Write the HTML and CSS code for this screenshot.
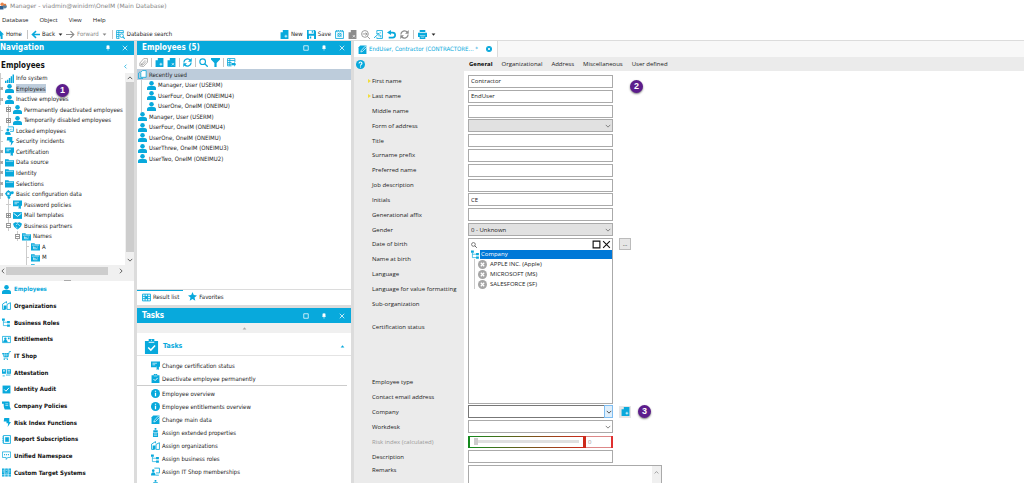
FILE: index.html
```html
<!DOCTYPE html>
<html lang="en">
<head>
<meta charset="utf-8">
<meta name="viewport" content="width=device-width, initial-scale=1">
<title>Manager - viadmin@winidm\OneIM (Main Database)</title>
<link rel="stylesheet" href="styles.css">
</head>
<body>
<svg class="sprite" aria-hidden="true">
  <symbol id="person" viewBox="0 0 16 16"><circle cx="8" cy="4.2" r="4"/><path d="M0 16v-3.500C0 9.800 3 8.600 8 8.600s8 1.200 8 3.900V16z"/></symbol>
  <symbol id="signal" viewBox="0 0 16 16"><path d="M0 12h2.600v4H0zM3.400 10H6v6H3.400zM6.800 7h2.600v9H6.800zM10.200 4h2.400v12h-2.400zM13.400 1H16v15h-2.600z"/></symbol>
  <symbol id="cert" viewBox="0 0 16 16"><path d="M0 1h16v9h-2a3 3 0 0 0-5 1H0z"/><path d="M2.500 4h8M2.500 6.800h5" stroke="#fff" stroke-width="1.200"/><circle cx="12" cy="10" r="2.600"/><path d="M10 11.500V16l2-1.400 2 1.400v-4.500z"/></symbol>
  <symbol id="locked" viewBox="0 0 16 16"><path d="M5 1.500h10v8H9M2 15.200h8" fill="none" stroke="currentColor" stroke-width="1.500"/><circle cx="5.200" cy="7" r="2.600"/><path d="M0 15c0-4 2-5 5-5s5 1 5 5z"/><path d="M9 7l2-2 2 2" fill="none" stroke="currentColor"/></symbol>
  <symbol id="bolt" viewBox="0 0 16 16"><path d="M4 0h9v7h3L10 16l1-6.500H8L8 6H3z"/></symbol>
  <symbol id="folder" viewBox="0 0 16 16"><path d="M0 2h6l1.500 2H16v11H0z"/><path d="M1.500 6h13" stroke="#fff" stroke-width=".9"/></symbol>
  <symbol id="folder-node" viewBox="0 0 16 16"><path d="M0 2h6l1.500 2H16v11H0z"/><path d="M1.500 5.500h13M4.500 8v4h7M4.500 9.500h4M11 8v2" stroke="#fff" stroke-width="1.100" fill="none"/></symbol>
  <symbol id="gears" viewBox="0 0 16 16"><circle cx="6" cy="6.500" r="3.800" fill="none" stroke="currentColor" stroke-width="2.600"/><path d="M5 0h2v13H5zM0 5.500h12v2H0z" opacity=".7"/><circle cx="6" cy="6.500" r="1.700" fill="#fff"/><circle cx="13" cy="5" r="2.600"/><circle cx="7" cy="13.500" r="2.400"/></symbol>
  <symbol id="mail" viewBox="0 0 16 16"><path d="M0 2h16v12H0z"/><path d="M1 4l7 5.500L15 4" fill="none" stroke="#fff" stroke-width="1.600"/></symbol>
  <symbol id="partners" viewBox="0 0 16 16"><path d="M0 5l4-3 4 1 4-1 4 3-2 5-6 5-6-5z"/><path d="M5 7l3-2 5 4M5 10l3 2.500" fill="none" stroke="#fff" stroke-width="1.100"/></symbol>
  <symbol id="building" viewBox="0 0 16 16"><path d="M1 15V5.500L8 1v3M1 15h5M9 6l6-3v12H9z" fill="none" stroke="currentColor" stroke-width="1.500"/><path d="M3 8h5v7H3z"/></symbol>
  <symbol id="roles" viewBox="0 0 16 16"><path d="M0 1h5v4H0zM9 5.500h5v4H9zM9 11.500h5v4H9z"/><path d="M2.500 5v8.500H9M2.500 7.500H9" fill="none" stroke="currentColor" stroke-width="1.200"/></symbol>
  <symbol id="entitle" viewBox="0 0 16 16"><path d="M.7 2.500h14.600v11H.7z" fill="none" stroke="currentColor" stroke-width="1.400"/><circle cx="6" cy="6.500" r="2.200"/><path d="M2 13c0-3 1.500-4 4-4s4 1 4 4zM10.500 4.500h3v3h-3z"/></symbol>
  <symbol id="cart" viewBox="0 0 16 16"><path d="M0 3.500h12l-1 7H3z"/><path d="M10 12.500H3M10.500 11L13 1h3" fill="none" stroke="currentColor" stroke-width="1.400"/><path d="M1 6h11M1.500 8.300h10M4.500 3v7M7.500 3v7" stroke="#fff" stroke-width=".6"/><circle cx="4" cy="14.700" r="1.200"/><circle cx="9.500" cy="14.700" r="1.200"/></symbol>
  <symbol id="attest" viewBox="0 0 16 16"><path d="M0 2h7v8H0zM8.500 2H16v8H8.500z"/><path d="M10 4.500h4.500M10 7h4.500" stroke="#fff" stroke-width="1.100"/><circle cx="3.500" cy="5" r="1.500" fill="#fff"/><path d="M1 14h4M7 12.500h8" stroke="currentColor" stroke-width="1.400"/></symbol>
  <symbol id="check" viewBox="0 0 16 16"><path d="M1 1h14v14H1z"/><path d="M4 8l3 3 5.500-6" fill="none" stroke="#fff" stroke-width="1.700"/></symbol>
  <symbol id="scroll" viewBox="0 0 16 16"><path d="M0 1h12c2 0 1.500 3 1.500 5 0 3 .5 5 2.500 9H5C3 12 3 9 3 5H0z"/><path d="M6 5h5M6 8h5" stroke="#fff" stroke-width="1"/></symbol>
  <symbol id="book" viewBox="0 0 16 16"><path d="M2.500 1h12.500v14H2.500z" fill="none" stroke="currentColor" stroke-width="1.500"/><path d="M6 4.500h6v7H6zM0 3.500h3M0 6.500h3M0 9.500h3M0 12.500h3" stroke="currentColor"/></symbol>
  <symbol id="chat" viewBox="0 0 16 16"><path d="M.8 1.500h14.400v10H10L7.500 15v-3.500H.8z" fill="none" stroke="currentColor" stroke-width="1.300"/><circle cx="4.500" cy="6.500" r="1.100"/><circle cx="8" cy="6.500" r="1.100"/><circle cx="11.500" cy="6.500" r="1.100"/></symbol>
  <symbol id="systems" viewBox="0 0 16 16"><path d="M0 1h4.500v14H0zM5.700 1h4.600v14H5.700zM11.500 1H16v14h-4.500z"/><path d="M1 4h2.500M6.700 4h2.600M12.500 4H15M1 7h2.500M6.700 9h2.600M12.500 7H15M0 12h16" stroke="#fff" stroke-width="1"/></symbol>
  <symbol id="home" viewBox="0 0 16 16"><path d="M8 0l8 8h-2.500v8H10v-5H6v5H2.500V8H0z"/></symbol>
  <symbol id="back" viewBox="0 0 16 16"><path d="M9 2L2.500 8 9 14M3 8h13" fill="none" stroke="currentColor" stroke-width="2.600"/></symbol>
  <symbol id="forward" viewBox="0 0 16 16"><path d="M8 2l6 6-6 6M14 8H0" fill="none" stroke="currentColor" stroke-width="2"/></symbol>
  <symbol id="dbsearch" viewBox="0 0 16 16"><path d="M13 6V1H1v14h5M1 4.500h12M1 8h5M1 11.500h4M5 1v14" fill="none" stroke="currentColor" stroke-width="1.400"/><circle cx="10" cy="10" r="3.200" fill="none" stroke="currentColor" stroke-width="1.500"/><path d="M12 12l3.500 3.500" stroke="currentColor" stroke-width="1.800"/></symbol>
  <symbol id="docplus" viewBox="0 0 16 16"><path d="M5 0h10v16H1V4h4z"/><path d="M10.500 8.500v5M8 11h5" stroke="#fff" stroke-width="1.300"/></symbol>
  <symbol id="docx" viewBox="0 0 16 16"><path d="M5 0h10v16H1V4h4z"/><path d="M8.500 9l4 4M12.500 9l-4 4" stroke="#fff" stroke-width="1.200"/></symbol>
  <symbol id="save" viewBox="0 0 16 16"><path d="M0 0h14l2 2v14H0z"/><path d="M3 1h9v5.500H3zM3.500 10h9v6h-9z" fill="#fff"/><path d="M8.500 1.500h2V5h-2zM5 11.500h2.500V15H5z"/></symbol>
  <symbol id="gearbox" viewBox="0 0 16 16"><path d="M1 2h14v13H1zM3 0v3M13 0v3M6 0v2M10 0v2" fill="none" stroke="currentColor" stroke-width="1.500"/><circle cx="8" cy="8.500" r="3" fill="none" stroke="currentColor" stroke-width="1.600"/><path d="M4 4.500l8 8M12 4.500l-8 8" stroke="currentColor"/></symbol>
  <symbol id="zoomrow" viewBox="0 0 16 16"><circle cx="7" cy="7" r="6" fill="none" stroke="currentColor" stroke-width="1.500"/><path d="M11.500 11.500L16 16M3 7h8M8 5l3 2-3 3" fill="none" stroke="currentColor" stroke-width="1.500"/></symbol>
  <symbol id="import" viewBox="0 0 16 16"><path d="M5 5V1h10v14H5v-2" fill="none" stroke="currentColor" stroke-width="1.500"/><path d="M0 14l8-7M4 6.500h5v5M11 4v2M12 9v4" fill="none" stroke="currentColor" stroke-width="1.600"/></symbol>
  <symbol id="undo" viewBox="0 0 16 16"><path d="M7 0v3h3a5.500 5.500 0 0 1 0 12H3v-3h7a2.500 2.500 0 0 0 0-6H7v3L0 4.500z"/></symbol>
  <symbol id="refresh" viewBox="0 0 16 16"><path d="M1.500 8A6.500 6.500 0 0 1 13 4M14.500 8A6.500 6.500 0 0 1 3 12" fill="none" stroke="currentColor" stroke-width="2.200"/><path d="M15.500 0v6.500H9zM.5 16V9.500H7z"/></symbol>
  <symbol id="print" viewBox="0 0 16 16"><path d="M3 0h10v4H3zM0 5h16v7.500H0zM3 11h10v5H3z"/><path d="M3.500 4.600h9M3 10h10M5 12.800h6" stroke="#fff"/></symbol>
  <symbol id="clip" viewBox="0 0 16 16"><path d="M1.500 14V9l7-8H15v6.500L8 15.200zM4 12l7-8M6.500 13l6-7M4 9.500V12h3" fill="none" stroke="currentColor" stroke-width="1.200"/></symbol>
  <symbol id="search" viewBox="0 0 16 16"><circle cx="6.500" cy="6.500" r="5" fill="none" stroke="currentColor" stroke-width="2"/><path d="M10 10l5.500 5.500" stroke="currentColor" stroke-width="2.400"/></symbol>
  <symbol id="filter" viewBox="0 0 16 16"><path d="M0 0h16v2.500L10 9v7H6V9L0 2.500z"/></symbol>
  <symbol id="export" viewBox="0 0 16 16"><path d="M1 1h13v6M1 1v13h7M1 4.500h13M1 8h7M1 11h7M5 1v13" fill="none" stroke="currentColor" stroke-width="1.500"/><path d="M8 9h5V6.500l3 4.500-3 4.500V13H8z"/></symbol>
  <symbol id="pages" viewBox="0 0 16 16"><path d="M8 1h6.500v12H5V4z" fill="#fff" stroke="currentColor" stroke-width="1.400"/><path d="M4 3L1 5.500V15h8" fill="none" stroke="currentColor" stroke-width="1.400"/></symbol>
  <symbol id="table" viewBox="0 0 16 16"><path d="M1 2h14v12H1zM1 6h14M1 10h14M5.500 2v12M10 2v12" fill="none" stroke="currentColor" stroke-width="1.600"/><path d="M5.500 6H10v4H5.500z"/></symbol>
  <symbol id="star" viewBox="0 0 16 16"><path d="M8 0l2.300 5.500 5.700.5-4.400 3.800L13 15.500 8 12.400 3 15.500l1.400-5.700L0 6l5.700-.5z"/></symbol>
  <symbol id="clipboard" viewBox="0 0 16 16"><path d="M1 2h4V0h6v2h4v14H1z"/><path d="M5 3.500h6M7.500 1.300h1" stroke="#fff"/><path d="M4.500 9l2.800 2.800L11.800 7" fill="none" stroke="#fff" stroke-width="1.600"/></symbol>
  <symbol id="info" viewBox="0 0 16 16"><circle cx="8" cy="8" r="8"/><path d="M8 6.500V13M8 3v2" stroke="#fff" stroke-width="2.200"/></symbol>
  <symbol id="edit" viewBox="0 0 16 16"><path d="M4 1h11v15H1V4z"/><path d="M5 12.500l1-3L13 2l2.500 2L8 11.500z" stroke="#fff" stroke-width="1.200"/></symbol>
  <symbol id="props" viewBox="0 0 16 16"><path d="M6.500 0h3v3h-3zM4 4h8v3H4zM3.500 8h9v8h-9z"/><path d="M5 10.500h6M5 13h6" stroke="#fff"/></symbol>
  <symbol id="shopuser" viewBox="0 0 16 16"><path d="M6 2h9v8.500H9M8 14.500h6" fill="none" stroke="currentColor" stroke-width="1.500"/><circle cx="4" cy="6.500" r="2.300"/><path d="M0 15c0-4 1.500-5.500 4-5.500S8 11 8 15z"/></symbol>
  <symbol id="help" viewBox="0 0 16 16"><circle cx="8" cy="8" r="8"/><path d="M5.300 6.200C5.500 2.600 10.800 2.800 10.600 6c-.1 1.800-2.600 1.800-2.600 4M8 11.500v2" fill="none" stroke="#fff" stroke-width="1.900"/></symbol>
  <symbol id="round-x" viewBox="0 0 16 16"><circle cx="8" cy="8" r="8"/><path d="M5 5l6 6M11 5l-6 6" stroke="#fff" stroke-width="2.200"/></symbol>
  <symbol id="pin" viewBox="0 0 16 16"><path d="M5 2h6v7H5zM3 9h10M8 9v6" stroke="currentColor" stroke-width="1.600"/></symbol>
  <symbol id="square" viewBox="0 0 16 16"><path d="M2 2h12v12H2z" fill="none" stroke="currentColor" stroke-width="2"/></symbol>
  <symbol id="cross" viewBox="0 0 16 16"><path d="M2 2l12 12M14 2L2 14" stroke="currentColor" stroke-width="2"/></symbol>
  <symbol id="down" viewBox="0 0 16 16"><path d="M2 5l6 6 6-6" fill="none" stroke="currentColor" stroke-width="2.400"/></symbol>
  <symbol id="up" viewBox="0 0 16 16"><path d="M2 11l6-6 6 6" fill="none" stroke="currentColor" stroke-width="2.400"/></symbol>
  <symbol id="left" viewBox="0 0 16 16"><path d="M11 2L5 8l6 6" fill="none" stroke="currentColor" stroke-width="2.400"/></symbol>
  <symbol id="right" viewBox="0 0 16 16"><path d="M5 2l6 6-6 6" fill="none" stroke="currentColor" stroke-width="2.400"/></symbol>
  <symbol id="caret" viewBox="0 0 16 16"><path d="M2 5h12l-6 7z"/></symbol>
  <symbol id="caret-up" viewBox="0 0 16 16"><path d="M2 11h12L8 4z"/></symbol>
  <symbol id="plus" viewBox="0 0 5 5"><path d="M0 0h5v5H0z" fill="#999"/><path d="M1 1h3v3H1z" fill="#fff"/><path d="M1 2.500h3M2.500 1v3" stroke="#777" stroke-width=".8"/></symbol>
  <symbol id="minus" viewBox="0 0 5 5"><path d="M0 0h5v5H0z" fill="#999"/><path d="M1 1h3v3H1z" fill="#fff"/><path d="M1 2.500h3" stroke="#777" stroke-width=".8"/></symbol>
</svg>

<header class="titlebar">
  <svg class="logo" viewBox="0 0 16 16" aria-hidden="true"><circle cx="5" cy="4" r="4" fill="#e8834a"/><path d="M0 8h8v8H0z" fill="#2d5f91"/><circle cx="11" cy="9" r="4.500" fill="#59819f"/><path d="M9 3h5v4H9z" fill="#db7c3f"/></svg>
  <h1>Manager - viadmin@winidm\OneIM (Main Database)</h1>
</header>
<nav class="menubar" aria-label="Menu">
  <button>Database</button><button>Object</button><button>View</button><button>Help</button>
</nav>
<div class="toolbar">
  <div class="tools-left">
    <button><svg class="i"><use href="#home"/></svg>Home</button><span class="sep"></span>
    <button><svg class="i"><use href="#back"/></svg>Back</button><button aria-label="Back history"><svg class="tiny"><use href="#caret"/></svg></button>
    <button class="muted"><svg class="i"><use href="#forward"/></svg>Forward</button><button class="muted" aria-label="Forward history"><svg class="tiny"><use href="#caret"/></svg></button><span class="sep"></span>
    <button><svg class="i"><use href="#dbsearch"/></svg>Database search</button>
  </div>
  <div class="tools-main">
    <button><svg class="i"><use href="#docplus"/></svg>New</button>
    <button><svg class="i"><use href="#save"/></svg>Save</button>
    <button aria-label="Configure"><svg class="i"><use href="#gearbox"/></svg></button>
    <button aria-label="Delete" class="muted"><svg class="i"><use href="#docx"/></svg></button>
    <button aria-label="Find" class="muted"><svg class="i"><use href="#zoomrow"/></svg></button>
    <button aria-label="Import"><svg class="i"><use href="#import"/></svg></button>
    <button aria-label="Undo"><svg class="i"><use href="#undo"/></svg></button>
    <button aria-label="Refresh" class="muted"><svg class="i"><use href="#refresh"/></svg></button><span class="sep"></span>
    <button aria-label="Print"><svg class="i"><use href="#print"/></svg></button><button aria-label="Print options"><svg class="tiny"><use href="#caret"/></svg></button>
  </div>
</div>

<div class="workspace">
  <aside class="panel navpanel">
    <header class="panel-head"><h2>Navigation</h2><button aria-label="Pin"><svg class="small"><use href="#pin"/></svg></button><button aria-label="Close"><svg class="small"><use href="#cross"/></svg></button></header>
    <div class="section-head"><h3>Employees</h3><button aria-label="Collapse"><svg class="tiny"><use href="#left"/></svg></button></div>
    <div class="tree-area">
      <ul class="tree">
        <li><span class="leaf"></span><svg class="i"><use href="#signal"/></svg>Info system</li>
        <li><svg class="exp"><use href="#plus"/></svg><svg class="i"><use href="#person"/></svg><span class="selected">Employees</span><b class="badge on-tree">1</b></li>
        <li><svg class="exp"><use href="#minus"/></svg><svg class="i"><use href="#person"/></svg>Inactive employees</li>
        <li class="d1"><svg class="exp"><use href="#plus"/></svg><svg class="i"><use href="#person"/></svg>Permanently deactivated employees</li>
        <li class="d1"><svg class="exp"><use href="#plus"/></svg><svg class="i"><use href="#person"/></svg>Temporarily disabled employees</li>
        <li><span class="leaf"></span><svg class="i"><use href="#locked"/></svg>Locked employees</li>
        <li><span class="leaf"></span><svg class="i"><use href="#bolt"/></svg>Security incidents</li>
        <li><svg class="exp"><use href="#plus"/></svg><svg class="i"><use href="#cert"/></svg>Certification</li>
        <li><svg class="exp"><use href="#plus"/></svg><svg class="i"><use href="#folder"/></svg>Data source</li>
        <li><svg class="exp"><use href="#plus"/></svg><svg class="i"><use href="#folder"/></svg>Identity</li>
        <li><svg class="exp"><use href="#plus"/></svg><svg class="i"><use href="#folder"/></svg>Selections</li>
        <li><svg class="exp"><use href="#minus"/></svg><svg class="i"><use href="#gears"/></svg>Basic configuration data</li>
        <li class="d1"><span class="leaf"></span><svg class="i"><use href="#cert"/></svg>Password policies</li>
        <li class="d1"><svg class="exp"><use href="#plus"/></svg><svg class="i"><use href="#mail"/></svg>Mail templates</li>
        <li class="d1"><svg class="exp"><use href="#minus"/></svg><svg class="i"><use href="#partners"/></svg>Business partners</li>
        <li class="d2"><svg class="exp"><use href="#minus"/></svg><svg class="i"><use href="#folder-node"/></svg>Names</li>
        <li class="d3"><span class="leaf"></span><svg class="i"><use href="#folder-node"/></svg>A</li>
        <li class="d3"><span class="leaf"></span><svg class="i"><use href="#folder-node"/></svg>M</li>
        <li class="d3"><span class="leaf"></span><svg class="i"><use href="#folder-node"/></svg></li>
      </ul>
      <div class="vbar"><svg class="small"><use href="#up"/></svg><span></span><svg class="small"><use href="#down"/></svg></div>
    </div>
    <div class="hbar"><svg class="small"><use href="#left"/></svg><span></span><svg class="small"><use href="#right"/></svg></div>
    <div class="splitter"></div>
    <nav class="modules" aria-label="Modules">
      <a href="#" class="current"><svg class="i"><use href="#person"/></svg>Employees</a>
      <a href="#"><svg class="i"><use href="#building"/></svg>Organizations</a>
      <a href="#"><svg class="i"><use href="#roles"/></svg>Business Roles</a>
      <a href="#"><svg class="i"><use href="#entitle"/></svg>Entitlements</a>
      <a href="#"><svg class="i"><use href="#cart"/></svg>IT Shop</a>
      <a href="#"><svg class="i"><use href="#attest"/></svg>Attestation</a>
      <a href="#"><svg class="i"><use href="#check"/></svg>Identity Audit</a>
      <a href="#"><svg class="i"><use href="#scroll"/></svg>Company Policies</a>
      <a href="#"><svg class="i"><use href="#bolt"/></svg>Risk Index Functions</a>
      <a href="#"><svg class="i"><use href="#book"/></svg>Report Subscriptions</a>
      <a href="#"><svg class="i"><use href="#chat"/></svg>Unified Namespace</a>
      <a href="#"><svg class="i"><use href="#systems"/></svg>Custom Target Systems</a>
    </nav>
  </aside>

  <div class="middle">
    <section class="panel results">
      <header class="panel-head wide"><h2>Employees (5)</h2><button aria-label="Maximize"><svg class="small"><use href="#square"/></svg></button><button aria-label="Pin"><svg class="small"><use href="#pin"/></svg></button><button aria-label="Close"><svg class="small"><use href="#cross"/></svg></button></header>
      <div class="list-tools">
        <button aria-label="Attach" class="muted"><svg class="i"><use href="#clip"/></svg></button><span class="sep"></span>
        <button aria-label="Add"><svg class="i"><use href="#docplus"/></svg></button>
        <button aria-label="Remove"><svg class="i"><use href="#docx"/></svg></button><span class="sep"></span>
        <button aria-label="Reload"><svg class="i"><use href="#refresh"/></svg></button><span class="sep"></span>
        <button aria-label="Search"><svg class="i"><use href="#search"/></svg></button>
        <button aria-label="Filter"><svg class="i"><use href="#filter"/></svg></button><span class="sep"></span>
        <button aria-label="Export"><svg class="i"><use href="#export"/></svg></button>
      </div>
      <ul class="people">
        <li class="group"><svg class="i"><use href="#pages"/></svg>Recently used</li>
        <li class="recent"><svg class="i"><use href="#person"/></svg>Manager, User (USERM)</li>
        <li class="recent"><svg class="i"><use href="#person"/></svg>UserFour, OneIM (ONEIMU4)</li>
        <li class="recent"><svg class="i"><use href="#person"/></svg>UserOne, OneIM (ONEIMU)</li>
        <li><svg class="i"><use href="#person"/></svg>Manager, User (USERM)</li>
        <li><svg class="i"><use href="#person"/></svg>UserFour, OneIM (ONEIMU4)</li>
        <li><svg class="i"><use href="#person"/></svg>UserOne, OneIM (ONEIMU)</li>
        <li><svg class="i"><use href="#person"/></svg>UserThree, OneIM (ONEIMU3)</li>
        <li><svg class="i"><use href="#person"/></svg>UserTwo, OneIM (ONEIMU2)</li>
      </ul>
      <div class="result-tabs"><button class="active"><svg class="i"><use href="#table"/></svg>Result list</button><button><svg class="i"><use href="#star"/></svg>Favorites</button></div>
    </section>
    <section class="panel tasks">
      <header class="panel-head wide"><h2>Tasks</h2><button aria-label="Maximize"><svg class="small"><use href="#square"/></svg></button><button aria-label="Pin"><svg class="small"><use href="#pin"/></svg></button><button aria-label="Close"><svg class="small"><use href="#cross"/></svg></button></header>
      <button class="scroll-up" aria-label="Scroll up"><svg class="tiny"><use href="#caret-up"/></svg></button>
      <div class="task-head"><svg class="big"><use href="#clipboard"/></svg><h3>Tasks</h3><svg class="tiny"><use href="#caret-up"/></svg></div>
      <div class="task-list">
        <a href="#"><svg class="i"><use href="#cert"/></svg>Change certification status</a>
        <a href="#"><svg class="i"><use href="#clipboard"/></svg>Deactivate employee permanently</a>
        <hr>
        <a href="#"><svg class="i"><use href="#info"/></svg>Employee overview</a>
        <a href="#"><svg class="i"><use href="#info"/></svg>Employee entitlements overview</a>
        <a href="#"><svg class="i"><use href="#edit"/></svg>Change main data</a>
        <a href="#"><svg class="i"><use href="#props"/></svg>Assign extended properties</a>
        <a href="#"><svg class="i"><use href="#building"/></svg>Assign organizations</a>
        <a href="#"><svg class="i"><use href="#roles"/></svg>Assign business roles</a>
        <a href="#"><svg class="i"><use href="#shopuser"/></svg>Assign IT Shop memberships</a>
        <a href="#" aria-label="More tasks"><svg class="i"><use href="#props"/></svg></a>
      </div>
    </section>
  </div>

  <main class="document">
    <div class="doc-tabs"><div class="doc-tab"><svg class="i"><use href="#edit"/></svg><span>EndUser, Contractor (CONTRACTORE... *</span><button aria-label="Close tab"><svg class="small"><use href="#round-x"/></svg></button></div></div>
    <div class="page-tabs">
      <button class="help" aria-label="Help"><svg class="i"><use href="#help"/></svg></button>
      <button class="active">General</button><button>Organizational</button><button>Address</button><button>Miscellaneous</button><button>User defined</button>
    </div>
    <form class="form">
      <div class="rows">
        <div class="row required"><label for="f1">First name</label><input id="f1" value="Contractor"><b class="badge beside">2</b></div>
        <div class="row required"><label for="f2">Last name</label><input id="f2" value="EndUser"></div>
        <div class="row"><label for="f3">Middle name</label><input id="f3"></div>
        <div class="row"><label for="f4">Form of address</label><span class="pick off"><select id="f4"><option></option></select><svg class="small"><use href="#down"/></svg></span></div>
        <div class="row"><label for="f5">Title</label><input id="f5"></div>
        <div class="row"><label for="f6">Surname prefix</label><input id="f6"></div>
        <div class="row"><label for="f7">Preferred name</label><input id="f7"></div>
        <div class="row"><label for="f8">Job description</label><input id="f8"></div>
        <div class="row"><label for="f9">Initials</label><input id="f9" value="CE"></div>
        <div class="row"><label for="f10">Generational affix</label><input id="f10"></div>
        <div class="row"><label for="f11">Gender</label><span class="pick off"><select id="f11"><option>0 - Unknown</option></select><svg class="small"><use href="#down"/></svg></span></div>
        <div class="row"><span class="label">Date of birth</span><span></span><button type="button" class="side more" aria-label="Choose date">...</button></div>
        <div class="row"><span class="label">Name at birth</span></div>
        <div class="row"><span class="label">Language</span></div>
        <div class="row"><span class="label">Language for value formatting</span></div>
        <div class="row"><span class="label">Sub-organization</span></div>
      </div>
      <div class="row tall"><span class="label">Certification status</span></div>
      <div class="rows lower">
        <div class="row"><span class="label">Employee type</span></div>
        <div class="row"><span class="label">Contact email address</span></div>
        <div class="row"><label for="f12">Company</label>
          <span class="pick open"><select id="f12"><option></option></select><span class="drop"><svg class="small"><use href="#down"/></svg></span>
            <span class="popup">
              <span class="popup-search"><svg class="small"><use href="#search"/></svg><input aria-label="Search company"><button type="button" aria-label="Maximize list"><svg class="i"><use href="#square"/></svg></button><button type="button" aria-label="Close list"><svg class="i bold"><use href="#cross"/></svg></button></span>
              <span class="popup-root"><svg class="i"><use href="#roles"/></svg><span>Company</span></span>
              <span class="popup-item"><svg class="i"><use href="#round-x"/></svg>APPLE INC. (Apple)</span>
              <span class="popup-item"><svg class="i"><use href="#round-x"/></svg>MICROSOFT (MS)</span>
              <span class="popup-item"><svg class="i"><use href="#round-x"/></svg>SALESFORCE (SF)</span>
            </span>
          </span>
          <button type="button" class="side" aria-label="New company"><svg class="i"><use href="#docplus"/></svg></button><b class="badge after">3</b></div>
        <div class="row"><label for="f13">Workdesk</label><span class="pick"><select id="f13"><option></option></select><svg class="small"><use href="#down"/></svg></span></div>
        <div class="row dim"><label for="f14">Risk index (calculated)</label><span class="risk"><span class="risk-track"><input id="f14" type="range" min="0" max="100" value="0"></span><output for="f14">0</output></span></div>
        <div class="row"><label for="f15">Description</label><input id="f15"></div>
        <div class="row remarks"><label for="f16">Remarks</label><span class="memo"><textarea id="f16"></textarea><span><svg class="tiny"><use href="#up"/></svg></span></span></div>
      </div>
    </form>
  </main>
</div>
</body>
</html>
```
FILE: styles.css
```css
:root {
  --accent: #08a9dc;
  --chrome: #f0f0f0;
  --line: #dcdcdc;
  --tahoma: "DejaVu Sans Condensed", "DejaVu Sans", sans-serif;
  --segoe: "Open Sans", "Noto Sans", sans-serif;
}
* { box-sizing: border-box; }
body {
  margin: 0;
  height: 100vh;
  display: flex;
  flex-direction: column;
  overflow: hidden;
  background: #fff;
  color: #222;
  font: 6px/8px var(--segoe);
}
h1, h2, h3, ul { margin: 0; padding: 0; font: inherit; }
ul { list-style: none; }
button { border: 0; padding: 0; background: none; color: inherit; font: inherit; display: flex; align-items: center; }
a { color: inherit; text-decoration: none; }
svg { fill: currentColor; flex: none; }
.sprite { position: absolute; width: 0; height: 0; }
.i { width: 9px; height: 9px; color: var(--accent); }
.tiny { width: 5px; height: 5px; }
.small { width: 6px; height: 6px; }
.big { width: 15px; height: 17px; color: var(--accent); }
.muted { color: #888; }
.muted .i { color: #8c8c8c; }
.sep { width: 1px; height: 9px; background: #c4c4c4; }

/* Window chrome */
.titlebar { flex: none; height: 11px; display: flex; align-items: center; gap: 3px; color: #858585; font-family: "DejaVu Sans", sans-serif; }
.logo { width: 7px; height: 8px; }
.menubar { flex: none; height: 17px; display: flex; align-items: center; gap: 11px; padding: 0 2px; }
.toolbar { flex: none; height: 12px; display: flex; align-items: center; font-family: var(--tahoma); }
.tools-left, .tools-main { display: flex; align-items: center; gap: 4px; height: 12px; }
.tools-left { flex: 0 0 280px; gap: 3px; }
.tools-left button:first-child .i { margin-left: -5px; }
.tools-left .sep { margin-left: 2px; }
.toolbar button { gap: 2px; }

/* Panels */
.workspace { flex: 1; min-height: 0; display: flex; gap: 3px; padding-top: 1px; background: var(--line); }
.panel { background: #fff; display: flex; flex-direction: column; min-height: 0; }
.panel-head { flex: none; height: 14px; display: flex; align-items: center; gap: 11px; padding: 0 6px 0 0; background: var(--accent); color: #fff; }
.panel-head.wide { gap: 12px; padding-left: 5px; }
.panel-head h2 { flex: 1; font: bold 8px/12px var(--tahoma); }
.navpanel { flex: 0 0 134px; font-family: var(--tahoma); }
.section-head { flex: none; height: 18px; padding: 4px 6px 0 1px; display: flex; justify-content: space-between; align-items: center; color: var(--accent); }
.section-head h3 { color: #111; font: bold 8px/12px var(--tahoma); }

/* Object tree */
.tree-area { flex: none; height: 192px; overflow: hidden; display: flex; }
.tree { flex: 1; min-width: 0; height: 200px; display: grid; grid-template-rows: repeat(19, 1fr); overflow: hidden; }
.tree li { position: relative; display: flex; align-items: center; gap: 2px; white-space: nowrap; min-height: 0; }
.tree li::before { content: ""; position: absolute; top: 0; bottom: 0; left: 0; width: 1px; background: #ccc; }
.tree .d1::before { left: 8px; }
.tree .d2::before { left: 17px; }
.tree .d3::before { left: 26px; }
.exp, .leaf { position: relative; flex: none; width: 3px; height: 5px; }
.leaf { height: 1px; background: #ccc; }
.d1 .exp, .d2 .exp, .d3 .exp, .d1 .leaf { width: 5px; }
.tree .d1 { padding-left: 6px; }
.tree .d2 { padding-left: 15px; }
.tree .d3 { padding-left: 26px; }
.selected { background: #bdccdb; line-height: 9px; }
.vbar { flex: none; width: 9px; background: var(--chrome); display: flex; flex-direction: column; align-items: center; justify-content: space-between; color: #555; padding: 2px 0; }
.vbar span { flex: 1; width: 8px; margin: 1px 0 5px; background: #cdcdcd; }
.hbar { flex: none; height: 11px; display: flex; align-items: center; justify-content: space-between; background: var(--chrome); color: #555; padding-right: 10px; }
.hbar span { flex: 1; height: 8px; margin: 0 10px 0 0; background: #cdcdcd; }
.splitter { flex: none; height: 5px; background: var(--chrome); display: flex; justify-content: center; align-items: flex-end; }
.splitter::after { content: ""; width: 7px; height: 1px; background: #aaa; }
.modules { height: 200px; display: grid; grid-template-rows: repeat(12, 1fr); padding-left: 2px; font-weight: bold; color: #111; }
.modules a { display: flex; align-items: center; gap: 3px; }
.modules .current { color: var(--accent); }

/* Result list and tasks */
.middle { flex: 0 0 214px; display: flex; flex-direction: column; gap: 3px; font-family: var(--tahoma); }
.results { flex: 0 0 264px; }
.list-tools { flex: none; height: 14px; display: flex; align-items: center; gap: 3px; padding-left: 2px; }
.people { flex: 1; display: grid; grid-template-rows: 11px repeat(8, 1fr); align-content: start; max-height: 95px; }
.people li { display: flex; align-items: center; gap: 2px; padding-left: 1px; }
.people .group { background: #bdccdb; }
.people .recent { margin-left: 4px; padding-left: 5px; border-left: 1px solid #ccc; }
.result-tabs { margin-top: auto; height: 16px; display: flex; gap: 1px; border-top: 1px solid var(--line); }
.result-tabs button { gap: 2px; padding: 0 4px 2px; }
.result-tabs .active { padding-left: 5px; border-top: 1px solid var(--accent); }
.tasks { flex: 1; overflow: hidden; }
.tasks .panel-head { height: 15px; }
.scroll-up { flex: none; height: 10px; background: var(--chrome); color: #aaa; justify-content: center; }
.task-head { flex: none; height: 23px; display: flex; align-items: center; gap: 4px; padding: 4px 6px 0 7px; border-bottom: 1px solid #e4e4e4; color: var(--accent); }
.task-head h3 { flex: 1; font: bold 7px/9px var(--tahoma); }
.task-list { flex: none; padding-top: 3px; }
.task-list a { height: 13px; margin-left: 14px; display: flex; align-items: center; gap: 2px; }
.task-list hr { margin: 0 4px 1px 0; border: 0; border-top: 1px solid #ccc; }

/* Document */
.document { flex: 1; min-width: 0; background: #fff; margin-left: -1px; border-left: 1px solid var(--line); }
.doc-tabs { height: 16px; display: flex; background: #f8f8f8; }
.doc-tab { display: flex; align-items: center; gap: 2px; padding: 0 5px 0 4px; background: #fff; border-right: 1px solid var(--line); color: var(--accent); font-family: var(--tahoma); }
.doc-tab button { margin-left: 6px; }
.page-tabs { position: relative; height: 14px; display: flex; gap: 9px; padding-left: 115px; background: #ebebeb; }
.page-tabs .active { font-weight: bold; color: #000; }
.help { position: absolute; left: 2px; top: 3px; }
.form { padding-top: 3px; background: linear-gradient(to right, #ebebeb 110px, #fff 110px); }
.rows { height: 237px; display: grid; grid-template-rows: repeat(16, 1fr); }
.rows.lower { height: 112px; grid-template-rows: repeat(6, 15px) 26px; }
.row { position: relative; display: grid; grid-template-columns: 96px 145px auto 1fr; align-items: center; padding-left: 18px; min-height: 0; }
.row.tall { height: 63px; align-items: start; padding-top: 12px; }
.row.required::before { content: ""; position: absolute; left: 14px; top: 5px; border-left: 3px solid #f1dd3c; border-top: 2px solid transparent; border-bottom: 2px solid transparent; }
.dim { color: #999; }
.row > input, .pick { width: 100%; height: 13px; }
input, select, textarea { border: 1px solid #aaa; border-radius: 0; margin: 0; padding: 0 2px; background: #fff; color: #222; font: inherit; outline: 0; }
.pick { position: relative; display: flex; align-items: center; color: #777; }
.pick > select { appearance: none; width: 100%; height: 100%; }
.pick > .small { position: absolute; right: 2px; top: 4px; }
.pick.off > select { background: #e1e1e1; }
.pick.open > select { border-color: #777; }
.drop { position: absolute; right: 0; top: 0; width: 9px; height: 13px; display: grid; place-items: center; border: 1px solid #7fbdf0; background: #e0effb; color: #444; }
.side { width: 12px; height: 12px; margin-left: 6px; justify-content: center; background: #e6e6e6; color: var(--accent); }
.more { border: 1px solid #bbb; color: #222; }

.popup { position: absolute; left: 0; right: 0; bottom: 14px; height: 166px; border: 1px solid #aaa; background: #fff; color: #222; z-index: 1; }
.popup-search { height: 11px; display: flex; align-items: center; gap: 1px; padding: 0 1px 0 0; }
.popup-search .small { margin-left: 2px; color: #555; }
.popup-search .i { color: #111; }
.popup-search input { flex: 1; min-width: 0; border: 0; height: 9px; }
.popup-search .bold { stroke: currentColor; stroke-width: 1px; }
.popup-root, .popup-item { display: flex; align-items: center; }
.popup-root .i { margin-left: 2px; }
.popup-root span { flex: 1; padding-left: 1px; line-height: 9px; background: #0078d7; color: #fff; }
.popup-item { height: 10px; gap: 3px; margin-left: 5px; padding-left: 3px; border-left: 1px solid #ccc; }
.popup-item .i { color: #a5a5a5; }

.risk { height: 12px; display: flex; border-right: 2px solid #e03030; color: #999; }
.risk-track { flex: 0 0 118px; display: flex; align-items: center; border: 1px solid; border-width: 1px 3px 1px 2px; border-image: linear-gradient(to right, #128a1c, #cf2a1c) 2; padding: 0 4px; }
.risk-track input { appearance: none; width: 100%; height: 3px; border: 0; padding: 0; background: #e0e0e0; }
.risk-track input::-webkit-slider-thumb { appearance: none; width: 4px; height: 7px; background: #ccc; }
.risk output { flex: 1; padding-left: 2px; border: 1px solid #d88; border-width: 1px 0; line-height: 10px; }
.remarks { align-items: start; padding-top: 1px; }
.remarks label { padding-top: 1px; }
.memo { width: 194px; height: 30px; display: flex; border: 1px solid #aaa; }
.memo textarea { flex: 1; min-width: 0; border: 0; resize: none; }
.memo > span { width: 9px; padding: 3px 2px; background: var(--chrome); color: #888; }

/* Callout numbers */
.badge { position: absolute; width: 13px; height: 13px; border-radius: 50%; background: #5c1c8c; color: #fff; font: bold 9px/13px "Liberation Sans", sans-serif; text-align: center; box-shadow: 0 1px 2px #0008; z-index: 2; }
.on-tree { left: 56px; top: 0; }
.beside { left: 276px; top: 6px; }
.after { left: 284px; top: 1px; }
```
